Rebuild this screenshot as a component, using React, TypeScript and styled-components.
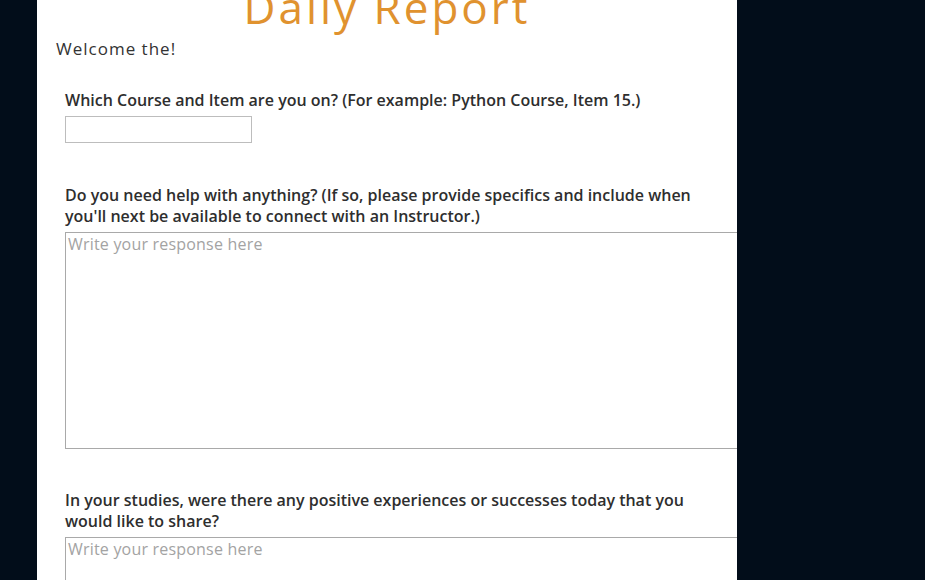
import React from 'react';
import styled, {createGlobalStyle} from 'styled-components';

const GlobalStyle = createGlobalStyle`
  html, body {
    margin: 0;
    padding: 0;
    background: #020d1a;
    height: 100%;
    overflow: hidden;
  }
  * {
    box-sizing: border-box;
  }
`;

const Page = styled.div`
  width: 700px;
  height: 580px;
  margin-left: 37px;
  background: #ffffff;
  overflow: hidden;
  font-family: 'Open Sans', 'Liberation Sans', sans-serif;
  color: #333333;
`;

const Title = styled.h1`
  margin: -21px 0 0;
  text-align: center;
  font-size: 44px;
  font-weight: 400;
  line-height: 56px;
  letter-spacing: 3px;
  color: #e0922f;
`;

const Welcome = styled.p`
  margin: 2px 0 0 19px;
  font-size: 17px;
  line-height: 24px;
  letter-spacing: 1px;
`;

const Form = styled.form`
  display: flex;
  flex-direction: column;
  padding: 27px 0 0 28px;
`;

const Field = styled.div<{$gap: number}>`
  display: flex;
  flex-direction: column;
  margin-bottom: ${(p) => p.$gap}px;
`;

const Label = styled.label`
  width: 640px;
  padding-top: 2px;
  font-size: 16px;
  font-weight: 600;
  line-height: 21px;
  margin-bottom: 5px;
  color: #2e2e2e;
`;

const Input = styled.input`
  width: 187px;
  height: 27px;
  border: 1px solid #bdbdbd;
  margin: 0;
`;

const Area = styled.textarea`
  width: 720px;
  height: 217px;
  border: 1px solid #a9a9a9;
  margin: 0;
  padding: 1px 2px;
  resize: none;
  font-family: inherit;
  font-size: 16px;
  line-height: 20px;
  letter-spacing: 0.2px;
  &::placeholder {
    color: #a3a3a3;
  }
`;

const App = () => {
  return (
    <>
      <GlobalStyle />
      <Page>
        <Title>Daily Report</Title>
        <Welcome>Welcome the!</Welcome>
        <Form>
          <Field $gap={40}>
            <Label>Which Course and Item are you on? (For example: Python Course, Item 15.)</Label>
            <Input type="text" />
          </Field>
          <Field $gap={39}>
            <Label>
              Do you need help with anything? (If so, please provide specifics and include when
              you'll next be available to connect with an Instructor.)
            </Label>
            <Area placeholder="Write your response here" />
          </Field>
          <Field $gap={39}>
            <Label>
              In your studies, were there any positive experiences or successes today that you
              would like to share?
            </Label>
            <Area placeholder="Write your response here" />
          </Field>
        </Form>
      </Page>
    </>
  );
};

export default App;
